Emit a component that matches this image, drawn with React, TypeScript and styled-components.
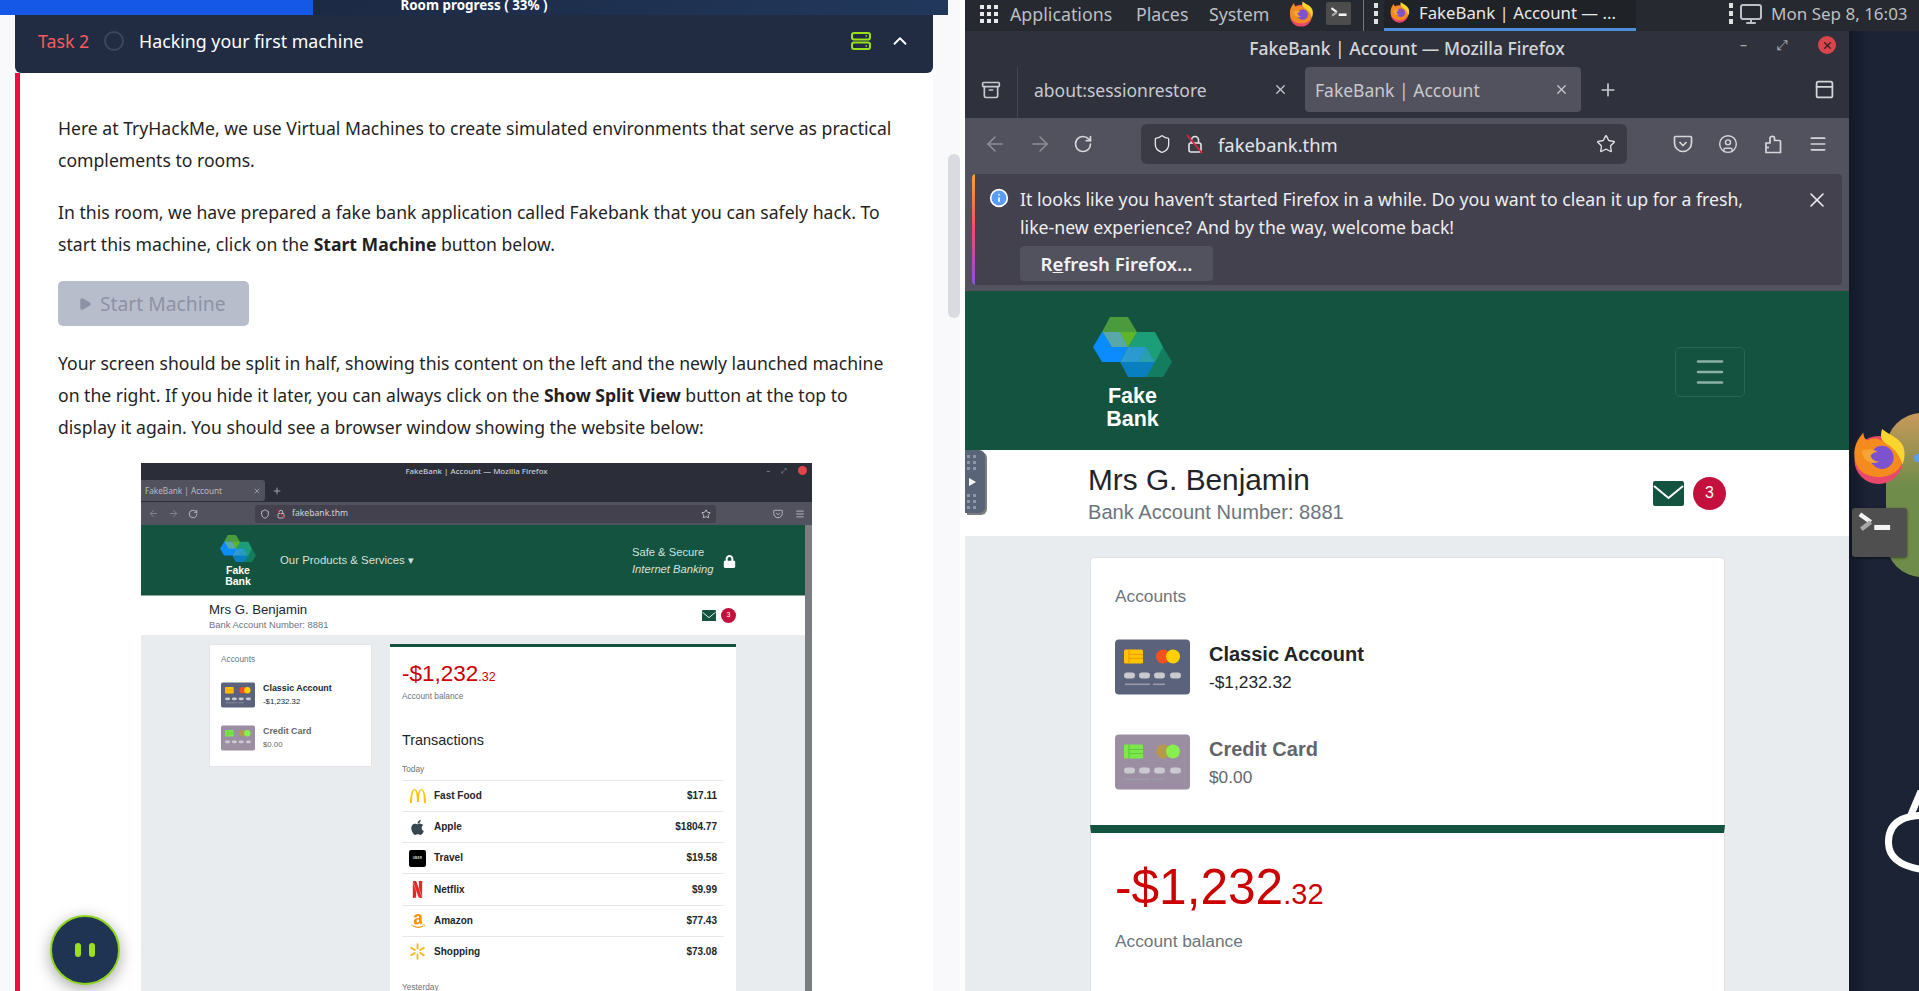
import React from 'react';
import styled, { createGlobalStyle } from 'styled-components';
import {
  ArrowLeft, ArrowRight, ChevronUp, Info, Menu, Plus, RotateCw, Shield, Star, X,
  CircleUser, Archive, PanelTop, Monitor, Play,
} from 'lucide-react';
import { FaApple, FaAmazon, FaLock } from 'react-icons/fa';
import { SiMcdonalds, SiNetflix } from 'react-icons/si';

const GlobalStyle = createGlobalStyle`
  html, body { margin: 0; padding: 0; background: #fff; overflow: hidden; }
  * { box-sizing: border-box; }
`;

const UI_FONT = `"Noto Sans", "Open Sans", sans-serif`;
const BANK_FONT = `"Liberation Sans", Arial, sans-serif`;
const GREEN = '#14533f';

const Page = styled.div`
  display: grid;
  grid-template-columns: 960px 959px;
  width: 1919px;
  height: 991px;
  overflow: hidden;
  font-family: ${UI_FONT};
`;

/* ---------- left: room page ---------- */

const LeftPane = styled.div`
  position: relative;
  display: flex;
  height: 991px;
  overflow: hidden;
  background: #fff;
`;

const RoomColumn = styled.div`
  width: 948px;
  display: flex;
  flex-direction: column;
  background: #f9f9fb;
`;

const ProgressBar = styled.div`
  position: relative;
  height: 15px;
  flex: none;
  overflow: hidden;
  background: linear-gradient(90deg, #1a2238, #21385c);
  color: #fff;
  font-size: 13.4px;
  font-weight: 700;
  line-height: 11px;
  text-align: center;
`;

const ProgressFill = styled.div`
  position: absolute;
  left: 0;
  top: 0;
  bottom: 0;
  background: #1557e6;
`;

const ProgressLabel = styled.span`
  position: relative;
`;

const TaskHeader = styled.div`
  display: flex;
  align-items: center;
  height: 58px;
  flex: none;
  margin: 0 15px;
  padding: 0 22px 6px 23px;
  background: #212c42;
  border-radius: 0 0 6px 6px;
  color: #fff;
  font-size: 17.8px;
`;

const TaskNo = styled.span`
  color: #f85a5f;
  width: 66px;
`;

const TaskCircle = styled.span`
  width: 20px;
  height: 20px;
  border-radius: 50%;
  border: 2px solid #3c465c;
  margin-right: 15px;
`;

const TaskTitle = styled.span`
  flex: 1;
`;

const ChevronWrap = styled.span`
  display: flex;
  margin-left: 18px;
  color: #fff;
`;

const TaskBody = styled.div`
  flex: 1;
  margin: 0 15px;
  padding: 39px 0 0 38px;
  background: #fff;
  border-left: 5px solid #f00b42;
  color: #1f1f24;
  font-size: 17.6px;
  line-height: 32px;
`;

const Para = styled.p`
  margin: 0 0 20px;
  white-space: nowrap;
`;

const StartButton = styled.div`
  display: flex;
  align-items: center;
  gap: 8px;
  width: 191px;
  height: 45px;
  margin: 21px 0;
  padding-left: 20px;
  background: #b8bdcb;
  border-radius: 5px;
  color: #8c93a5;
  font-size: 19.3px;
`;

const Scrollbar = styled.div`
  width: 12px;
  padding-top: 154px;
  background: #f9f9fb;
`;

const ScrollThumb = styled.div`
  height: 164px;
  border-radius: 6px;
  background: #d9dbe1;
`;

const PauseFab = styled.div`
  position: absolute;
  left: 50px;
  top: 915px;
  display: flex;
  align-items: center;
  justify-content: center;
  gap: 8px;
  width: 70px;
  height: 70px;
  border-radius: 50%;
  background: #1f3352;
  border: 2px solid #8fd61f;
  box-shadow: 0 4px 16px rgba(0, 0, 0, 0.35);
`;

const PauseBar = styled.span`
  width: 6px;
  height: 14px;
  border-radius: 3px;
  background: #9be01f;
`;

/* ---------- embedded screenshot ---------- */

const Shot = styled.div`
  width: 671px;
  margin: 0 0 0 83px;
  background: #2b2e39;
  font-family: ${BANK_FONT};
  line-height: 1.2;
`;

const ShotTitle = styled.div`
  position: relative;
  height: 16px;
  color: #c9cbd1;
  font-family: ${UI_FONT};
  font-size: 7.9px;
  font-weight: 500;
  line-height: 16px;
  text-align: center;
`;

const ShotControls = styled.div`
  position: absolute;
  right: 5px;
  top: 3px;
  display: flex;
  align-items: center;
  gap: 11px;
  color: #9a9ca5;
  font-size: 7px;
  line-height: 9px;
`;

const ShotClose = styled.span`
  width: 9px;
  height: 9px;
  border-radius: 50%;
  background: #e0454a;
`;

const ShotTabs = styled.div`
  display: flex;
  align-items: center;
  height: 23px;
  color: #b9bbc2;
  font-family: ${UI_FONT};
  font-size: 8.2px;
`;

const ShotTab = styled.div`
  display: flex;
  align-items: center;
  justify-content: space-between;
  width: 124px;
  height: 21px;
  margin-right: 7px;
  padding: 0 4px;
  background: #52525e;
  border-radius: 0 3px 3px 0;
`;

const ShotNav = styled.div`
  display: flex;
  align-items: center;
  height: 23px;
  padding: 0 7px;
  background: #52525e;
  color: #c5c6cc;
`;

const ShotNavSet = styled.div`
  display: flex;
  align-items: center;
  gap: 9px;
  width: 107px;
`;

const ShotUrl = styled.div`
  display: flex;
  align-items: center;
  gap: 6px;
  width: 461px;
  height: 18px;
  padding: 0 5px;
  background: #42414d;
  border-radius: 3px;
  color: #d5d6da;
  font-family: ${UI_FONT};
  font-size: 8.6px;
`;

const Grow = styled.span`
  flex: 1;
`;

const ShotNavRight = styled.div`
  display: flex;
  justify-content: flex-end;
  gap: 12px;
  flex: 1;
`;

const ShotViewport = styled.div`
  border-right: 7px solid #7b7d80;
  background: #e9ecef;
`;

const ShotHeader = styled.div`
  display: flex;
  align-items: center;
  height: 71px;
  padding: 2px 69px 0 79px;
  background: ${GREEN};
  border-bottom: 1px solid #8aa69b;
  color: #d5e0dc;
`;

const ShotLogo = styled.div`
  display: flex;
  flex-direction: column;
  align-items: center;
  width: 36px;
  margin-right: 24px;
  color: #fff;
  font-size: 10.5px;
  font-weight: 700;
  line-height: 11px;
  text-align: center;
`;

const ShotLogoLabel = styled.div`
  margin-top: 3px;
`;

const ShotProducts = styled.div`
  flex: 1;
  font-size: 11.4px;
`;

const ShotSafe = styled.div`
  width: 91px;
  font-size: 11.2px;
  line-height: 17px;
`;

const ShotUser = styled.div`
  display: flex;
  align-items: center;
  justify-content: space-between;
  height: 39px;
  padding: 0 69px 0 68px;
  background: #fff;
  color: #212529;
`;

const ShotName = styled.div`
  font-size: 13.2px;
  line-height: 17px;
`;

const ShotNumber = styled.div`
  color: #6c757d;
  font-size: 9.4px;
  line-height: 13px;
`;

const Badge = styled.span<{ $size: number; $font: number }>`
  display: inline-flex;
  align-items: center;
  justify-content: center;
  width: ${p => p.$size}px;
  height: ${p => p.$size}px;
  border-radius: 50%;
  background: #c4103c;
  color: #fff;
  font-size: ${p => p.$font}px;
`;

const MailSet = styled.div<{ $gap: number }>`
  display: flex;
  align-items: center;
  gap: ${p => p.$gap}px;
`;

const ShotMain = styled.div`
  display: flex;
  align-items: flex-start;
  gap: 18px;
  padding: 9px 69px 0 68px;
`;

const ShotSide = styled.div`
  width: 163px;
  height: 123px;
  padding: 10px 11px 0;
  background: #fff;
  border: 1px solid #e3e5e8;
`;

const ShotCaption = styled.div`
  color: #6c757d;
  font-size: 8.3px;
`;

const ShotAccount = styled.div`
  display: flex;
  gap: 8px;
  margin-top: 17px;
  height: 26px;
`;

const ShotAccountName = styled.div`
  font-size: 8.9px;
  font-weight: 700;
  line-height: 13px;
  color: #212529;
  white-space: nowrap;
`;

const ShotAccountValue = styled.div`
  font-size: 7.8px;
  line-height: 13px;
  color: #212529;
`;

const Muted = styled.div`
  opacity: 0.7;
`;

const ShotCard = styled.div`
  width: 346px;
  height: 500px;
  padding: 12px 12px 0;
  background: #fff;
  border-top: 3px solid ${GREEN};
`;

const ShotBalance = styled.div`
  color: #cc0000;
  font-size: 22.5px;
  line-height: 30px;
`;

const ShotBalanceCents = styled.span`
  font-size: 12.5px;
`;

const ShotHeading = styled.div`
  margin: 28px 0 15px;
  color: #212529;
  font-size: 14.4px;
  line-height: 20px;
`;

const ShotToday = styled(ShotCaption)`
  margin-bottom: 5px;
`;

const ShotRow = styled.div`
  display: flex;
  align-items: center;
  height: 31.2px;
  padding: 0 7px;
  border-top: 1px solid #e6e8eb;
  color: #212529;
  font-size: 10px;
  font-weight: 700;
`;

const ShotRowIcon = styled.span`
  display: flex;
  justify-content: center;
  width: 17px;
  margin-right: 8px;
`;

const UberMark = styled.span`
  display: flex;
  align-items: center;
  justify-content: center;
  width: 17px;
  height: 17px;
  border-radius: 2px;
  background: #000;
  color: #ddd;
  font-size: 3px;
  letter-spacing: 0.3px;
`;

const ShotYesterday = styled(ShotCaption)`
  margin-top: 16px;
`;

/* ---------- right: desktop ---------- */

const RightPane = styled.div`
  display: flex;
  flex-direction: column;
  height: 991px;
  padding-left: 5px;
  background: #fff;
`;

const DesktopPanel = styled.div`
  display: flex;
  align-items: center;
  height: 31px;
  flex: none;
  padding-left: 15px;
  background: #26292f;
  color: #bcbfc4;
  font-size: 17.8px;
  white-space: nowrap;
`;

const PanelText = styled.span<{ $w?: number }>`
  ${p => (p.$w ? `width: ${p.$w}px;` : '')}
  margin-top: -4px;
`;

const AppGrid = styled.div`
  display: grid;
  grid-template-columns: repeat(3, 4px);
  gap: 3px;
  margin: -4px 12px 0 0;
`;

const GridDot = styled.span`
  width: 4px;
  height: 4px;
  background: #e9e9e9;
`;

const PanelIcon = styled.span`
  display: flex;
  margin-top: -4px;
`;

const PanelTile = styled.div`
  display: flex;
  align-items: center;
  justify-content: center;
  width: 25px;
  height: 23px;
  margin: -4px 12px 0;
  border-radius: 2px;
  background: #4c4c4c;
`;

const PanelDivider = styled.span`
  width: 1px;
  height: 31px;
  background: #777;
  margin-right: 10px;
`;

const PanelHandle = styled.span`
  display: flex;
  flex-direction: column;
  gap: 3px;
  margin: -4px 6px 0 0;
`;

const HandleDot = styled.span`
  width: 4px;
  height: 5px;
  background: #e0e0e0;
`;

const PanelTask = styled.div`
  display: flex;
  align-items: center;
  gap: 9px;
  width: 252px;
  height: 31px;
  margin-right: 93px;
  padding: 0 0 3px 5px;
  border-bottom: 3px solid #4a8fd8;
  background: #1f2227;
  color: #e8e9ea;
  font-size: 16.8px;
  overflow: hidden;
`;

const PanelClock = styled(PanelText)`
  margin-left: 8px;
  font-size: 17px;
`;

const DesktopBody = styled.div`
  position: relative;
  display: flex;
  flex: 1;
  overflow: hidden;
  background: #1b2335;
`;

const BrowserWindow = styled.div`
  display: flex;
  flex-direction: column;
  width: 884px;
  flex: none;
  background: #2f323c;
`;

const WindowTitle = styled.div`
  position: relative;
  height: 36px;
  flex: none;
  color: #d5d6da;
  font-size: 17.5px;
  font-weight: 500;
  line-height: 35px;
  text-align: center;
`;

const WindowControls = styled.div`
  position: absolute;
  right: 13px;
  top: 5px;
  display: flex;
  align-items: center;
  gap: 30px;
  color: #a6a8ae;
  font-size: 14px;
  line-height: 18px;
`;

const CloseDot = styled.span`
  display: flex;
  align-items: center;
  justify-content: center;
  width: 18px;
  height: 18px;
  border-radius: 50%;
  background: #d9454a;
  color: #3b2025;
`;

const TabStrip = styled.div`
  display: flex;
  align-items: center;
  height: 51px;
  flex: none;
  padding-bottom: 6px;
  color: #c8c9ce;
  font-size: 17.5px;
`;

const TabIcon = styled.div`
  display: flex;
  justify-content: center;
  align-items: center;
  width: 53px;
  height: 51px;
  margin-bottom: -6px;
  padding-bottom: 6px;
  border-right: 1px solid #44474f;
  color: #c8c9ce;
`;

const Tab = styled.div<{ $active?: boolean }>`
  display: flex;
  align-items: center;
  justify-content: space-between;
  width: ${p => (p.$active ? 276 : 282)}px;
  height: 45px;
  margin-right: ${p => (p.$active ? 17 : 5)}px;
  padding: 0 12px 0 ${p => (p.$active ? 10 : 16)}px;
  background: ${p => (p.$active ? '#52525e' : 'transparent')};
  border-radius: 4px;
`;

const TabSpacer = styled.div`
  flex: 1;
`;

const PanelButton = styled.div`
  display: flex;
  margin-right: 14px;
  color: #d5d6da;
`;

const ToolArea = styled.div`
  height: 173px;
  flex: none;
  background: #52525e;
`;

const NavBar = styled.div`
  display: flex;
  align-items: center;
  height: 52px;
  margin-bottom: 4px;
  color: #d5d6da;
`;

const NavButtons = styled.div`
  display: flex;
  align-items: center;
  gap: 21px;
  width: 176px;
  padding-left: 18px;
`;

const DimIcon = styled.span`
  display: flex;
  opacity: 0.45;
`;

const UrlBar = styled.div`
  display: flex;
  align-items: center;
  gap: 13px;
  width: 486px;
  height: 40px;
  padding: 0 11px;
  background: #3a3b45;
  border-radius: 6px;
  color: #e5e6e9;
  font-size: 18.4px;
`;

const UrlText = styled.span`
  margin-left: 0;
`;

const NavRight = styled.div`
  display: flex;
  align-items: center;
  gap: 25px;
  margin-left: 46px;
`;

const InfoBar = styled.div`
  position: relative;
  display: grid;
  grid-template-columns: 48px 1fr 55px;
  height: 111px;
  margin: 0 7px;
  padding-top: 11px;
  background: #42414d;
  border-radius: 4px;
  color: #eeeef0;
  font-size: 17.7px;
  line-height: 28px;
  overflow: hidden;

  &::before {
    content: '';
    position: absolute;
    left: 0;
    top: 0;
    bottom: 0;
    width: 3px;
    background: linear-gradient(#f6a230, #ef4b6e, #8b4ee8);
  }
`;

const InfoIcon = styled.div`
  display: flex;
  justify-content: center;
  padding: 3px 0 0 5px;
`;

const RefreshButton = styled.div`
  display: flex;
  align-items: center;
  justify-content: center;
  width: 193px;
  height: 35px;
  margin-top: 5px;
  background: #52525e;
  border-radius: 4px;
  color: #f2f2f4;
  font-size: 18.6px;
  font-weight: 600;
`;

const AccessKey = styled.span`
  text-decoration: underline;
`;

const Viewport = styled.div`
  flex: 1;
  background: #e9ecef;
  font-family: ${BANK_FONT};
`;

const BankHeader = styled.div`
  display: flex;
  align-items: center;
  justify-content: space-between;
  height: 159px;
  padding: 6px 104px 0 128px;
  background: ${GREEN};
`;

const Logo = styled.div`
  display: flex;
  flex-direction: column;
  align-items: center;
  color: #fff;
  font-size: 21.5px;
  font-weight: 700;
  line-height: 23px;
  text-align: center;
`;

const LogoLabel = styled.div`
  margin-top: 8px;
`;

const Hamburger = styled.div`
  display: flex;
  align-items: center;
  justify-content: center;
  width: 70px;
  height: 50px;
  margin-bottom: 3px;
  border: 1px solid #2b6451;
  border-radius: 5px;
  color: #8fb0a5;
`;

const UserBar = styled.div`
  position: relative;
  display: flex;
  align-items: center;
  justify-content: space-between;
  height: 86px;
  padding: 0 123px;
  background: #fff;
`;

const UserName = styled.div`
  color: #212529;
  font-size: 29.8px;
  line-height: 35px;
`;

const UserNumber = styled.div`
  margin-top: 2px;
  color: #6c757d;
  font-size: 20.1px;
  line-height: 26px;
`;

const SplitHandle = styled.div`
  position: absolute;
  left: 0;
  top: 0;
  display: flex;
  flex-direction: column;
  align-items: center;
  justify-content: center;
  gap: 8px;
  width: 20px;
  height: 63px;
  padding-right: 7px;
  border-radius: 0 6px 6px 0;
  background: #5a6478;
  box-shadow: 2px 2px 0 #7d7d7d;
`;

const GripGroup = styled.div`
  display: grid;
  grid-template-columns: 3px 3px;
  gap: 3px;
`;

const HandleGrip = styled.span`
  width: 3px;
  height: 3px;
  background: #8e97a8;
`;

const HandleArrow = styled.span`
  width: 0;
  height: 0;
  margin-left: 2px;
  border-left: 7px solid #fff;
  border-top: 4px solid transparent;
  border-bottom: 4px solid transparent;
`;

const AccountsArea = styled.div`
  padding: 21px 124px 0 125px;
`;

const AccountsCard = styled.div`
  height: 268px;
  padding: 28px 24px 0;
  background: #fff;
  border: 1px solid #dfe2e5;
  border-bottom: none;
  border-radius: 4px 4px 0 0;
`;

const Caption = styled.div`
  color: #6c757d;
  font-size: 17.3px;
  line-height: 20px;
`;

const AccountRow = styled.div<{ $top: number }>`
  display: flex;
  gap: 19px;
  margin-top: ${p => p.$top}px;
  height: 56px;
`;

const AccountName = styled.div`
  color: #212529;
  font-size: 20px;
  font-weight: 700;
  line-height: 28px;
  margin-top: 1px;
`;

const AccountValue = styled.div`
  color: #212529;
  font-size: 17.3px;
  line-height: 28px;
`;

const BalanceCard = styled.div`
  height: 300px;
  padding: 26px 24px 0;
  background: #fff;
  border-top: 8px solid ${GREEN};
  border-left: 1px solid #dfe2e5;
  border-right: 1px solid #dfe2e5;
`;

const Balance = styled.div`
  color: #cc0000;
  font-size: 49.6px;
  line-height: 56px;
  margin-bottom: 9px;
`;

const BalanceCents = styled.span`
  font-size: 29px;
`;

const DesktopBlob = styled.div`
  position: absolute;
  left: 921px;
  top: 382px;
  width: 90px;
  height: 164px;
  border-radius: 36px;
  background: linear-gradient(#c9995a, #6f8c4a 45%, #6f8c4a);

  &::after {
    content: '';
    position: absolute;
    left: 28px;
    top: 41px;
    width: 8px;
    height: 8px;
    border-radius: 50%;
    background: #5b9df5;
  }
`;

const DesktopIconSlot = styled.div<{ $top: number; $left: number }>`
  position: absolute;
  left: ${p => p.$left}px;
  top: ${p => p.$top}px;
`;

const TerminalTile = styled.div`
  display: flex;
  width: 55px;
  height: 49px;
  padding: 4px 0 0 5px;
  border-radius: 3px;
  background: #4f4f4f;
  box-shadow: 0 1px 3px rgba(0, 0, 0, 0.5);
`;

const DesktopRing = styled.div`
  position: absolute;
  left: 920px;
  top: 740px;
`;

const DesktopShade = styled.div`
  width: 20px;
  height: 100%;
  background: linear-gradient(90deg, #131927, #1b2335);
`;

/* ---------- drawings ---------- */

const FirefoxIcon: React.FC<{ size: number }> = ({ size }) => (
  <svg width={size} height={size} viewBox="0 0 64 64">
    <circle cx="32" cy="36" r="27" fill="#e8496b" />
    <path d="M5 32C4 20 9 12 15 5c0 5 2 8 5 9 5-3 9-3 13-1 6 3 21 6 26 19 1 13-10 23-27 23C16 55 6 46 5 32z" fill="#f58a1f" />
    <path d="M36 1c-2 7-2 12 4 16 8 5 14 9 19 24 3-8 3-16 0-22C55 11 45 8 36 1z" fill="#fbd52f" />
    <circle cx="36" cy="33" r="13" fill="#7d52cf" />
    <path d="M13 26c6-3 13-3 18 1-4 0-6 2-8 4 1 4 5 7 10 7-7 3-15 0-18-6z" fill="#f7a532" />
  </svg>
);

const TerminalGlyph: React.FC<{ size: number }> = ({ size }) => (
  <svg width={size} height={size * 0.72} viewBox="0 0 50 36">
    <path d="M4 3l15 11" stroke="#f4f4f4" strokeWidth="6" fill="none" />
    <path d="M19 14L6 24" stroke="#a8a8a8" strokeWidth="6" fill="none" />
    <rect x="24" y="18" width="22" height="7" fill="#f4f4f4" />
  </svg>
);

const BankLogo: React.FC<{ width: number }> = ({ width }) => (
  <svg width={width} viewBox="0 0 79 60">
    <polygon points="53,30 70,30 79,45 70,60 53,60 45,45" fill="#147d5f" />
    <polygon points="44,15 62,15 70,30 62,45 44,45 35,30" fill="#1c9f78" />
    <polygon points="17,0 35,0 44,15 35,30 17,30 9,15" fill="#4a9a3e" />
    <polygon points="9,15 27,15 35,30 27,45 9,45 0,30" fill="#0a8cff" />
    <polygon points="10,15 27,15 35,30 19,30" fill="#58a8a8" />
    <polygon points="27,15 44,15 35,30" fill="#5fb52a" />
    <polygon points="35,30 53,30 62,45 53,60 35,60 27,45" fill="#0a7fbf" />
    <polygon points="35,30 53,30 45,45 27,45" fill="#2a9ad0" />
    <polygon points="53,30 62,45 45,45" fill="#2a9fb0" />
  </svg>
);

const CardIcon: React.FC<{ width: number; tone: 'classic' | 'credit' }> = ({ width, tone }) => {
  const c = tone === 'classic'
    ? { bg: '#5a627c', chip: '#ffc400', chipLine: '#f59a00', a: '#f4511e', b: '#ffd000' }
    : { bg: '#9c8ea2', chip: '#7de84b', chipLine: '#62c83a', a: '#b69a4c', b: '#86f04f' };
  return (
    <svg width={width} viewBox="0 0 75 55">
      <rect width="75" height="55" rx="4" fill={c.bg} />
      <rect x="9" y="10" width="19" height="14" rx="1.5" fill={c.chip} />
      <path d={`M14 10v14M14 15h14M14 19h14`} stroke={c.chipLine} strokeWidth="1.2" />
      <circle cx="48" cy="17" r="7" fill={c.a} />
      <circle cx="58" cy="17" r="7" fill={c.b} />
      {[9, 24, 39, 55].map(x => <rect key={x} x={x} y="33" width="11" height="6" rx="3" fill="#c9c9cf" />)}
      <rect x="10" y="44" width="25" height="1.6" fill="#9a9aa8" />
      <rect x="38" y="44" width="12" height="1.6" fill="#9a9aa8" />
    </svg>
  );
};

const ServerIcon: React.FC = () => (
  <svg width="20" height="18" viewBox="0 0 20 18" fill="none" stroke="#9be01f" strokeWidth="2">
    <rect x="1" y="1" width="18" height="6.5" rx="2" />
    <rect x="1" y="10.5" width="18" height="6.5" rx="2" />
    <path d="M14.5 4h1.5M14.5 14h1.5" strokeWidth="1.5" />
  </svg>
);

const MailIcon: React.FC<{ width: number }> = ({ width }) => (
  <svg width={width} viewBox="0 0 31 25">
    <rect width="31" height="25" rx="2" fill={GREEN} />
    <path d="M1 5l14.5 12L30 5" fill="none" stroke="#fff" strokeWidth="2" />
  </svg>
);

const StruckLock: React.FC<{ size: number }> = ({ size }) => (
  <svg width={size} height={size} viewBox="0 0 20 20" fill="none" stroke="currentColor" strokeWidth="1.6">
    <rect x="4" y="9" width="12" height="9" rx="2" />
    <path d="M6.5 9V6a3.5 3.5 0 0 1 7 0v3" />
    <path d="M2 1l15 18" stroke="#e0243f" strokeWidth="1.8" />
  </svg>
);

const PocketIcon: React.FC<{ size: number }> = ({ size }) => (
  <svg width={size} height={size} viewBox="0 0 20 20" fill="none" stroke="currentColor" strokeWidth="1.7">
    <path d="M2.5 2.5h15a1 1 0 0 1 1 1V9a8.5 8.5 0 0 1-17 0V3.5a1 1 0 0 1 1-1z" />
    <path d="M6.5 8l3.5 3.5L13.5 8" />
  </svg>
);

const ExtensionIcon: React.FC<{ size: number }> = ({ size }) => (
  <svg width={size} height={size} viewBox="0 0 20 20" fill="none" stroke="currentColor" strokeWidth="1.7">
    <path d="M3 18.5V9h4V4.5a2.2 2.2 0 0 1 2.2-2.2h.3a2 2 0 0 1 2 2V6.5H16.5a1 1 0 0 1 1 1V18.5z" />
    <path d="M3 13.5h3" />
  </svg>
);

const SparkIcon: React.FC<{ size: number }> = ({ size }) => (
  <svg width={size} height={size} viewBox="0 0 20 20" stroke="#ffb51f" strokeWidth="2.2" strokeLinecap="round">
    <path d="M10 1.5v5M10 13.5v5M2.6 5.7l4.3 2.5M13.1 11.8l4.3 2.5M2.6 14.3l4.3-2.5M13.1 8.2l4.3-2.5" />
  </svg>
);

const RingShape: React.FC = () => (
  <svg width="60" height="150" viewBox="0 0 60 150" fill="none" stroke="#fff" strokeWidth="7">
    <path d="M60 46C20 40 3 50 3.5 72 4 92 25 100 60 100" />
    <path d="M25 46l11-26" />
  </svg>
);

/* ---------- data ---------- */

const shotRows = [
  { name: 'Fast Food', price: '$17.11', icon: <SiMcdonalds size={16} color="#ffc300" /> },
  { name: 'Apple', price: '$1804.77', icon: <FaApple size={17} color="#36474f" /> },
  { name: 'Travel', price: '$19.58', icon: <UberMark>UBER</UberMark> },
  { name: 'Netflix', price: '$9.99', icon: <SiNetflix size={17} color="#e4282e" /> },
  { name: 'Amazon', price: '$77.43', icon: <FaAmazon size={16} color="#f7920a" /> },
  { name: 'Shopping', price: '$73.08', icon: <SparkIcon size={17} /> },
];

const gridDots = Array.from({ length: 9 }, (_, i) => i);
const gripDots = Array.from({ length: 6 }, (_, i) => i);

const Grips: React.FC = () => (
  <GripGroup>{gripDots.map(i => <HandleGrip key={i} />)}</GripGroup>
);

const EmbeddedShot: React.FC = () => (
  <Shot>
    <ShotTitle>
      FakeBank | Account — Mozilla Firefox
      <ShotControls>
        <span>–</span><span>⤢</span><ShotClose />
      </ShotControls>
    </ShotTitle>
    <ShotTabs>
      <ShotTab>
        FakeBank | Account <X size={8} />
      </ShotTab>
      <Plus size={10} />
    </ShotTabs>
    <ShotNav>
      <ShotNavSet>
        <DimIcon><ArrowLeft size={11} /></DimIcon>
        <DimIcon><ArrowRight size={11} /></DimIcon>
        <RotateCw size={10} />
      </ShotNavSet>
      <ShotUrl>
        <Shield size={10} />
        <StruckLock size={10} />
        fakebank.thm
        <Grow />
        <Star size={10} />
      </ShotUrl>
      <ShotNavRight>
        <PocketIcon size={10} />
        <Menu size={10} />
      </ShotNavRight>
    </ShotNav>
    <ShotViewport>
      <ShotHeader>
        <ShotLogo>
          <BankLogo width={36} />
          <ShotLogoLabel>Fake<br />Bank</ShotLogoLabel>
        </ShotLogo>
        <ShotProducts>Our Products &amp; Services ▾</ShotProducts>
        <ShotSafe>
          Safe &amp; Secure<br /><i>Internet Banking</i>
        </ShotSafe>
        <FaLock size={13} color="#fff" />
      </ShotHeader>
      <ShotUser>
        <div>
          <ShotName>Mrs G. Benjamin</ShotName>
          <ShotNumber>Bank Account Number: 8881</ShotNumber>
        </div>
        <MailSet $gap={5}>
          <MailIcon width={14} />
          <Badge $size={15} $font={7}>3</Badge>
        </MailSet>
      </ShotUser>
      <ShotMain>
        <ShotSide>
          <ShotCaption>Accounts</ShotCaption>
          <ShotAccount>
            <CardIcon width={34} tone="classic" />
            <div>
              <ShotAccountName>Classic Account</ShotAccountName>
              <ShotAccountValue>-$1,232.32</ShotAccountValue>
            </div>
          </ShotAccount>
          <ShotAccount>
            <CardIcon width={34} tone="credit" />
            <Muted>
              <ShotAccountName>Credit Card</ShotAccountName>
              <ShotAccountValue>$0.00</ShotAccountValue>
            </Muted>
          </ShotAccount>
        </ShotSide>
        <ShotCard>
          <ShotBalance>-$1,232<ShotBalanceCents>.32</ShotBalanceCents></ShotBalance>
          <ShotCaption>Account balance</ShotCaption>
          <ShotHeading>Transactions</ShotHeading>
          <ShotToday>Today</ShotToday>
          {shotRows.map(r => (
            <ShotRow key={r.name}>
              <ShotRowIcon>{r.icon}</ShotRowIcon>
              {r.name}
              <Grow />
              {r.price}
            </ShotRow>
          ))}
          <ShotYesterday>Yesterday</ShotYesterday>
        </ShotCard>
      </ShotMain>
    </ShotViewport>
  </Shot>
);

const App: React.FC = () => (
  <Page>
    <GlobalStyle />
    <LeftPane>
      <RoomColumn>
        <ProgressBar>
          <ProgressFill style={{ width: '33%' }} />
          <ProgressLabel>Room progress ( 33% )</ProgressLabel>
        </ProgressBar>
        <TaskHeader>
          <TaskNo>Task 2</TaskNo>
          <TaskCircle />
          <TaskTitle>Hacking your first machine</TaskTitle>
          <ServerIcon />
          <ChevronWrap><ChevronUp size={22} /></ChevronWrap>
        </TaskHeader>
        <TaskBody>
          <Para>
            Here at TryHackMe, we use Virtual Machines to create simulated environments that serve as practical<br />
            complements to rooms.
          </Para>
          <Para>
            In this room, we have prepared a fake bank application called Fakebank that you can safely hack. To<br />
            start this machine, click on the <b>Start Machine</b> button below.
          </Para>
          <StartButton><Play size={14} fill="currentColor" /> Start Machine</StartButton>
          <Para>
            Your screen should be split in half, showing this content on the left and the newly launched machine<br />
            on the right. If you hide it later, you can always click on the <b>Show Split View</b> button at the top to<br />
            display it again. You should see a browser window showing the website below:
          </Para>
          <EmbeddedShot />
        </TaskBody>
      </RoomColumn>
      <Scrollbar><ScrollThumb /></Scrollbar>
      <PauseFab><PauseBar /><PauseBar /></PauseFab>
    </LeftPane>

    <RightPane>
      <DesktopPanel>
        <AppGrid>{gridDots.map(i => <GridDot key={i} />)}</AppGrid>
        <PanelText $w={126}>Applications</PanelText>
        <PanelText $w={73}>Places</PanelText>
        <PanelText $w={79}>System</PanelText>
        <PanelIcon><FirefoxIcon size={26} /></PanelIcon>
        <PanelTile><TerminalGlyph size={18} /></PanelTile>
        <PanelDivider />
        <PanelHandle><HandleDot /><HandleDot /><HandleDot /></PanelHandle>
        <PanelTask>
          <FirefoxIcon size={21} />
          FakeBank | Account — ...
        </PanelTask>
        <PanelHandle><HandleDot /><HandleDot /><HandleDot /></PanelHandle>
        <PanelIcon><Monitor size={24} /></PanelIcon>
        <PanelClock>Mon Sep 8, 16:03</PanelClock>
      </DesktopPanel>
      <DesktopBody>
        <BrowserWindow>
          <WindowTitle>
            FakeBank | Account — Mozilla Firefox
            <WindowControls>
              <span>–</span><span>⤢</span>
              <CloseDot><X size={11} strokeWidth={3} /></CloseDot>
            </WindowControls>
          </WindowTitle>
          <TabStrip>
            <TabIcon><Archive size={20} /></TabIcon>
            <Tab>about:sessionrestore <X size={15} /></Tab>
            <Tab $active>FakeBank | Account <X size={15} /></Tab>
            <Plus size={20} />
            <TabSpacer />
            <PanelButton><PanelTop size={21} /></PanelButton>
          </TabStrip>
          <ToolArea>
            <NavBar>
              <NavButtons>
                <DimIcon><ArrowLeft size={24} strokeWidth={1.6} /></DimIcon>
                <DimIcon><ArrowRight size={24} strokeWidth={1.6} /></DimIcon>
                <RotateCw size={20} />
              </NavButtons>
              <UrlBar>
                <Shield size={20} strokeWidth={1.6} />
                <StruckLock size={20} />
                <UrlText>fakebank.thm</UrlText>
                <Grow />
                <Star size={20} strokeWidth={1.6} />
              </UrlBar>
              <NavRight>
                <PocketIcon size={20} />
                <CircleUser size={20} strokeWidth={1.7} />
                <ExtensionIcon size={20} />
                <Menu size={20} />
              </NavRight>
            </NavBar>
            <InfoBar>
              <InfoIcon><Info size={20} fill="#5b9df5" color="#fff" /></InfoIcon>
              <div>
                It looks like you haven’t started Firefox in a while. Do you want to clean it up for a fresh,<br />
                like-new experience? And by the way, welcome back!
                <RefreshButton>R<AccessKey>e</AccessKey>fresh Firefox…</RefreshButton>
              </div>
              <InfoIcon><X size={24} strokeWidth={1.6} /></InfoIcon>
            </InfoBar>
          </ToolArea>
          <Viewport>
            <BankHeader>
              <Logo>
                <BankLogo width={79} />
                <LogoLabel>Fake<br />Bank</LogoLabel>
              </Logo>
              <Hamburger><Menu size={36} strokeWidth={1.7} /></Hamburger>
            </BankHeader>
            <UserBar>
              <SplitHandle>
                <Grips />
                <HandleArrow />
                <Grips />
              </SplitHandle>
              <div>
                <UserName>Mrs G. Benjamin</UserName>
                <UserNumber>Bank Account Number: 8881</UserNumber>
              </div>
              <MailSet $gap={9}>
                <MailIcon width={31} />
                <Badge $size={33} $font={16}>3</Badge>
              </MailSet>
            </UserBar>
            <AccountsArea>
              <AccountsCard>
                <Caption>Accounts</Caption>
                <AccountRow $top={33}>
                  <CardIcon width={75} tone="classic" />
                  <div>
                    <AccountName>Classic Account</AccountName>
                    <AccountValue>-$1,232.32</AccountValue>
                  </div>
                </AccountRow>
                <AccountRow $top={39}>
                  <CardIcon width={75} tone="credit" />
                  <Muted>
                    <AccountName>Credit Card</AccountName>
                    <AccountValue>$0.00</AccountValue>
                  </Muted>
                </AccountRow>
              </AccountsCard>
              <BalanceCard>
                <Balance>-$1,232<BalanceCents>.32</BalanceCents></Balance>
                <Caption>Account balance</Caption>
              </BalanceCard>
            </AccountsArea>
          </Viewport>
        </BrowserWindow>
        <DesktopShade />
        <DesktopBlob />
        <DesktopIconSlot $top={397} $left={885}><FirefoxIcon size={57} /></DesktopIconSlot>
        <DesktopIconSlot $top={477} $left={887}>
          <TerminalTile><TerminalGlyph size={36} /></TerminalTile>
        </DesktopIconSlot>
        <DesktopRing><RingShape /></DesktopRing>
      </DesktopBody>
    </RightPane>
  </Page>
);

export default App;
